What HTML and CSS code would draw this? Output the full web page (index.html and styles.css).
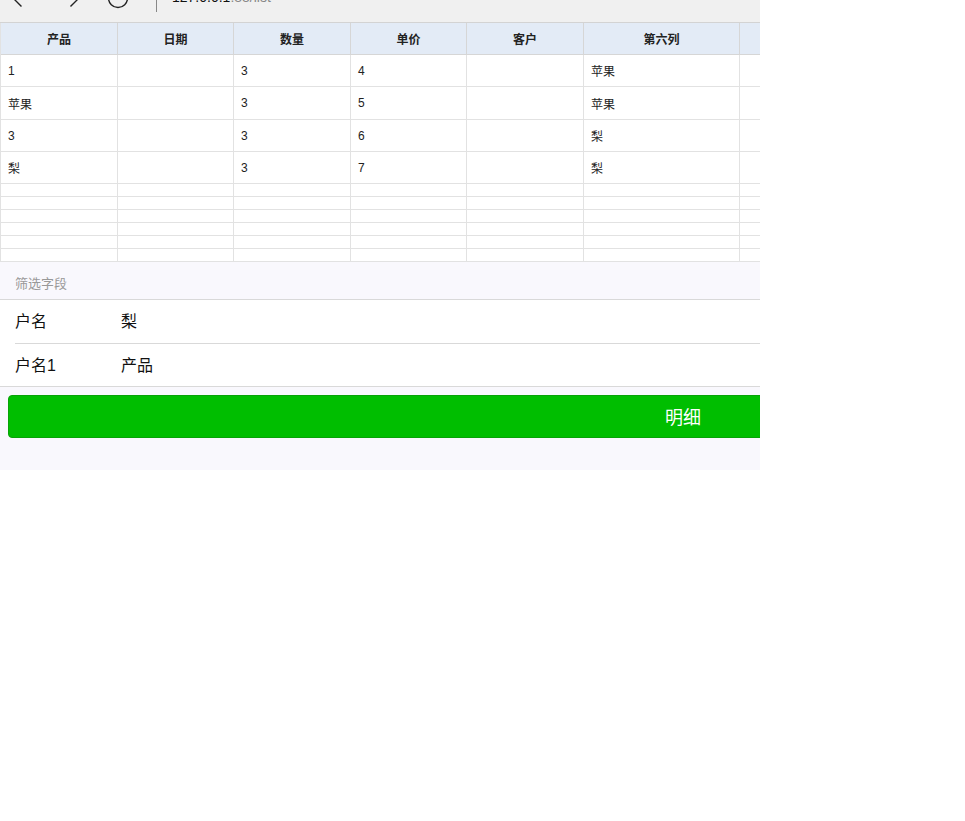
FILE: index.html
```html
<!DOCTYPE html>
<html lang="zh-CN">
<head>
    <meta charset="utf-8">
    <meta name="viewport" content="width=device-width, initial-scale=1.0">
    <title>list</title>
    <link rel="stylesheet" href="styles.css">
</head>
<body>
    <div class="viewport">
        <div class="page">
            <div class="toolbar">
                <span class="nav">
                    <svg width="24" height="24" viewBox="0 0 24 24"><path d="M21 12H3M11.5 3.5L3 12l8.5 8.5" fill="none" stroke="#222" stroke-width="1.4"/></svg>
                </span>
                <span class="nav">
                    <svg width="24" height="24" viewBox="0 0 24 24"><path d="M3 12h18M12.5 3.5L21 12l-8.5 8.5" fill="none" stroke="#222" stroke-width="1.4"/></svg>
                </span>
                <span class="nav">
                    <svg width="24" height="24" viewBox="0 0 24 24"><circle cx="12" cy="12" r="9.5" fill="none" stroke="#222" stroke-width="1.4"/></svg>
                </span>
                <span class="divider"></span>
                <span class="url">127.0.0.1<span class="path">:88/list</span></span>
            </div>

            <table class="grid">
                <colgroup>
                    <col style="width:117px"><col style="width:116px"><col style="width:117px">
                    <col style="width:116px"><col style="width:117px"><col style="width:156px">
                    <col style="width:156px"><col style="width:156px"><col>
                </colgroup>
                <thead>
                    <tr><th>产品</th><th>日期</th><th>数量</th><th>单价</th><th>客户</th><th>第六列</th><th>第七列</th><th>第八列</th><th></th></tr>
                </thead>
                <tbody>
                    <tr><td>1</td><td></td><td>3</td><td>4</td><td></td><td>苹果</td><td></td><td></td><td></td></tr>
                    <tr class="tall"><td>苹果</td><td></td><td>3</td><td>5</td><td></td><td>苹果</td><td></td><td></td><td></td></tr>
                    <tr><td>3</td><td></td><td>3</td><td>6</td><td></td><td>梨</td><td></td><td></td><td></td></tr>
                    <tr><td>梨</td><td></td><td>3</td><td>7</td><td></td><td>梨</td><td></td><td></td><td></td></tr>
                    <tr class="blank"><td></td><td></td><td></td><td></td><td></td><td></td><td></td><td></td><td></td></tr>
                    <tr class="blank"><td></td><td></td><td></td><td></td><td></td><td></td><td></td><td></td><td></td></tr>
                    <tr class="blank"><td></td><td></td><td></td><td></td><td></td><td></td><td></td><td></td><td></td></tr>
                    <tr class="blank"><td></td><td></td><td></td><td></td><td></td><td></td><td></td><td></td><td></td></tr>
                    <tr class="blank"><td></td><td></td><td></td><td></td><td></td><td></td><td></td><td></td><td></td></tr>
                    <tr class="blank"><td></td><td></td><td></td><td></td><td></td><td></td><td></td><td></td><td></td></tr>
                </tbody>
            </table>

            <section class="filter">
                <div class="filter-title">筛选字段</div>
                <div class="filter-list">
                    <div class="filter-row"><span class="filter-label">户名</span><span>梨</span></div>
                    <div class="filter-row"><span class="filter-label">户名1</span><span>产品</span></div>
                </div>
                <button class="detail-btn">明细</button>
            </section>
        </div>
    </div>
</body>
</html>
```

FILE: styles.css
```css
body {
    margin: 0;
    font-family: "Liberation Sans", "Noto Sans CJK SC", sans-serif;
    color: #222;
    background-color: #fff;
}
.viewport {
    width: 760px;
    height: 470px;
    overflow: hidden;
}
.page {
    width: 1366px;
}
.toolbar {
    display: flex;
    align-items: center;
    height: 44px;
    margin-top: -22px;
    padding-left: 10px;
    background-color: #f0f0f0;
    border-bottom: 1px solid #d3d3d3;
    overflow: hidden;
}
.nav {
    display: flex;
    width: 24px;
    margin-right: 24px;
    transform: translateY(-2px);
}
.divider {
    width: 1px;
    height: 34px;
    margin: 0 15px 0 2px;
    background-color: #888;
    align-self: flex-start;
}
.url {
    font-size: 14px;
    color: #111;
    transform: translateY(-3px);
}
.url .path {
    color: #888;
}

.grid {
    width: 100%;
    table-layout: fixed;
    border-collapse: separate;
    border-spacing: 0;
    border-left: 1px solid #e2e2e2;
    font-size: 12px;
}
.grid th,
.grid td {
    padding: 0 0 0 7px;
    border-right: 1px solid #e2e2e2;
    border-bottom: 1px solid #e2e2e2;
    height: 31px;
    text-align: left;
    color: #222;
    white-space: nowrap;
    overflow: hidden;
}
.grid th {
    padding: 0;
    text-align: center;
    font-weight: bold;
    background-color: #e3ebf6;
    border-right-color: #d6d6d6;
    border-bottom-color: #d6d6d6;
}
.grid tr.tall td {
    height: 32px;
}
.grid tr.blank td {
    height: 12px;
}

.filter {
    background-color: #f9f8fd;
    padding-bottom: 33px;
}
.filter-title {
    height: 37px;
    line-height: 44px;
    padding-left: 15px;
    font-size: 13px;
    color: #999;
    border-bottom: 1px solid #d9d9d9;
}
.filter-list {
    background-color: #fff;
    border-bottom: 1px solid #d9d9d9;
}
.filter-row {
    display: flex;
    align-items: center;
    box-sizing: border-box;
    height: 43px;
    padding-bottom: 4px;
    margin-left: 15px;
    font-size: 16px;
    color: #111;
}
.filter-row + .filter-row {
    height: 43px;
    padding-bottom: 3px;
    border-top: 1px solid #d9d9d9;
}
.filter-label {
    width: 106px;
}
.detail-btn {
    display: block;
    width: calc(100% - 16px);
    height: 43px;
    margin: 8px 8px 0;
    padding-bottom: 3px;
    font-family: inherit;
    font-size: 18px;
    color: #fff;
    background-color: #00be00;
    border: 1px solid #07a307;
    border-radius: 4px;
}
```
